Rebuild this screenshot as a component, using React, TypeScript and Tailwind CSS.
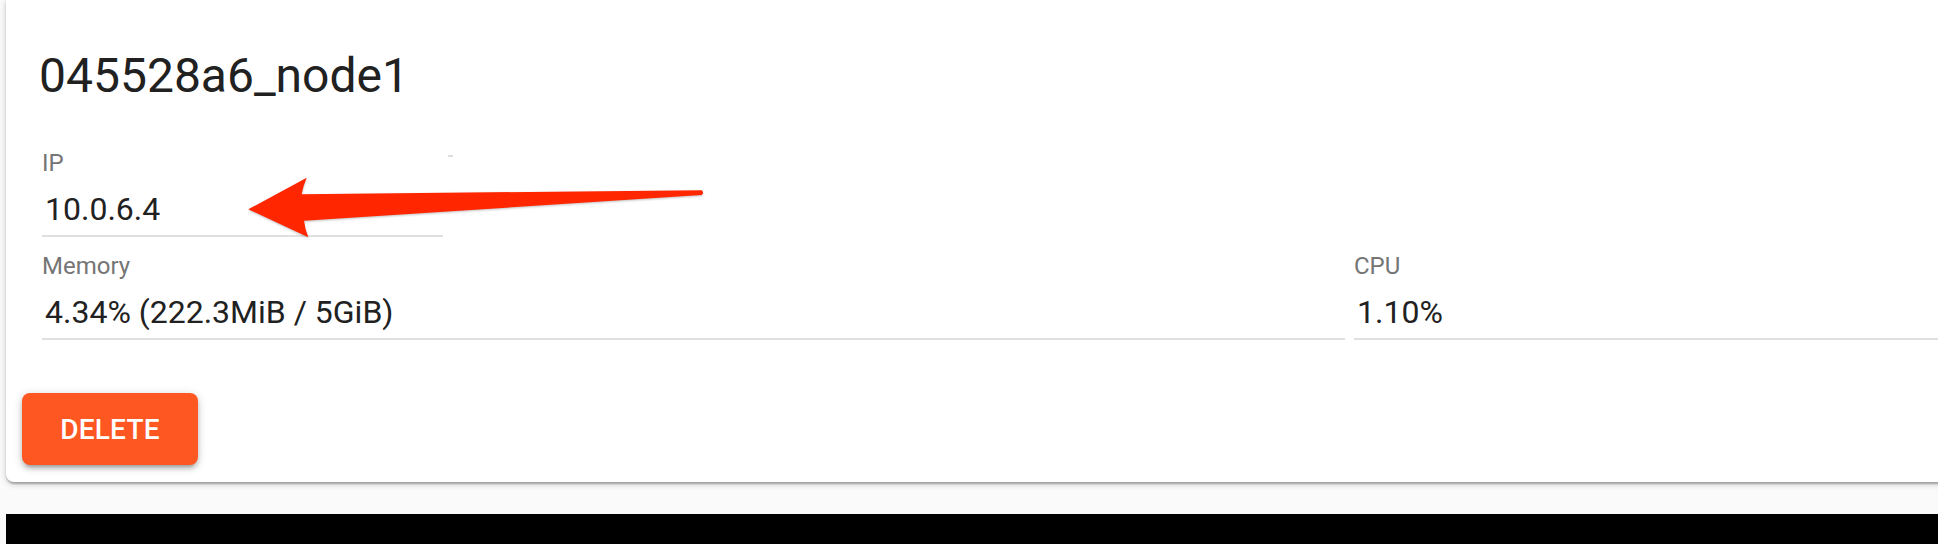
import React from "react";

function Field({
  label,
  value,
  className,
}: {
  label: string;
  value: string;
  className?: string;
}) {
  return (
    <div className={"flex flex-col " + (className ?? "")}>
      <div className="h-[24px] text-[24px] leading-[24px] text-[#757575]">{label}</div>
      <div className="mt-[15px] h-[38px] pl-[3px] text-[32px] leading-[38px] text-[#212121] whitespace-nowrap">
        {value}
      </div>
      <div className="mt-[7px] h-[2px] bg-[#e0e0e0]" />
    </div>
  );
}

export default function App() {
  return (
    <div className="relative flex h-[544px] w-full flex-col overflow-hidden bg-[#fafafa] pl-[6px] font-['Roboto',sans-serif]">
      <div className="relative -mr-[60px] flex h-[482px] flex-col rounded-b-[8px] bg-white pl-[36px] pt-[48px] shadow-[0_2px_6px_rgba(0,0,0,0.2),0_2px_2px_rgba(0,0,0,0.14),0_4px_2px_-2px_rgba(0,0,0,0.12)]">
        <h1 className="-ml-[3px] h-[56px] text-[48px] font-normal leading-[56px] text-[#212121]">
          045528a6_node1
        </h1>

        <div className="mt-[47px] flex items-start">
          <Field label="IP" value="10.0.6.4" className="w-[401px]" />
          <div className="ml-[5px] mt-[4px] h-[2px] w-[5px] bg-[#dddddd]" />
        </div>

        <div className="mt-[17px] flex gap-[9px]">
          <Field label="Memory" value="4.34% (222.3MiB / 5GiB)" className="w-[1303px]" />
          <Field label="CPU" value="1.10%" className="flex-1" />
        </div>

        <div className="mt-[53px]">
          <button className="-ml-[20px] flex h-[72px] w-[176px] items-center justify-center rounded-[8px] bg-[#ff5722] pt-[2px] text-[28px] font-medium tracking-[0.2px] text-white shadow-[0_2px_10px_rgba(0,0,0,0.2),0_4px_4px_rgba(0,0,0,0.14),0_6px_2px_-4px_rgba(0,0,0,0.12)]">
            DELETE
          </button>
        </div>
      </div>

      <div className="h-[32px] shrink-0" />
      <div className="h-[30px] shrink-0 bg-black" />

      <svg
        className="pointer-events-none absolute left-[240px] top-[170px] h-[75px] w-[470px]"
        viewBox="240 170 470 75"
        style={{ filter: "drop-shadow(0px 1px 1px rgba(0,0,0,0.25))" }}
      >
        <path
          d="M248.3 209.3 L306.7 177.7 Q303 186 301.7 194.3 L701.7 190.2 Q704.5 192.6 701.7 195 L304 220.7 Q305 229 308.3 237.3 Z"
          fill="#ff2600"
        />
      </svg>
    </div>
  );
}
